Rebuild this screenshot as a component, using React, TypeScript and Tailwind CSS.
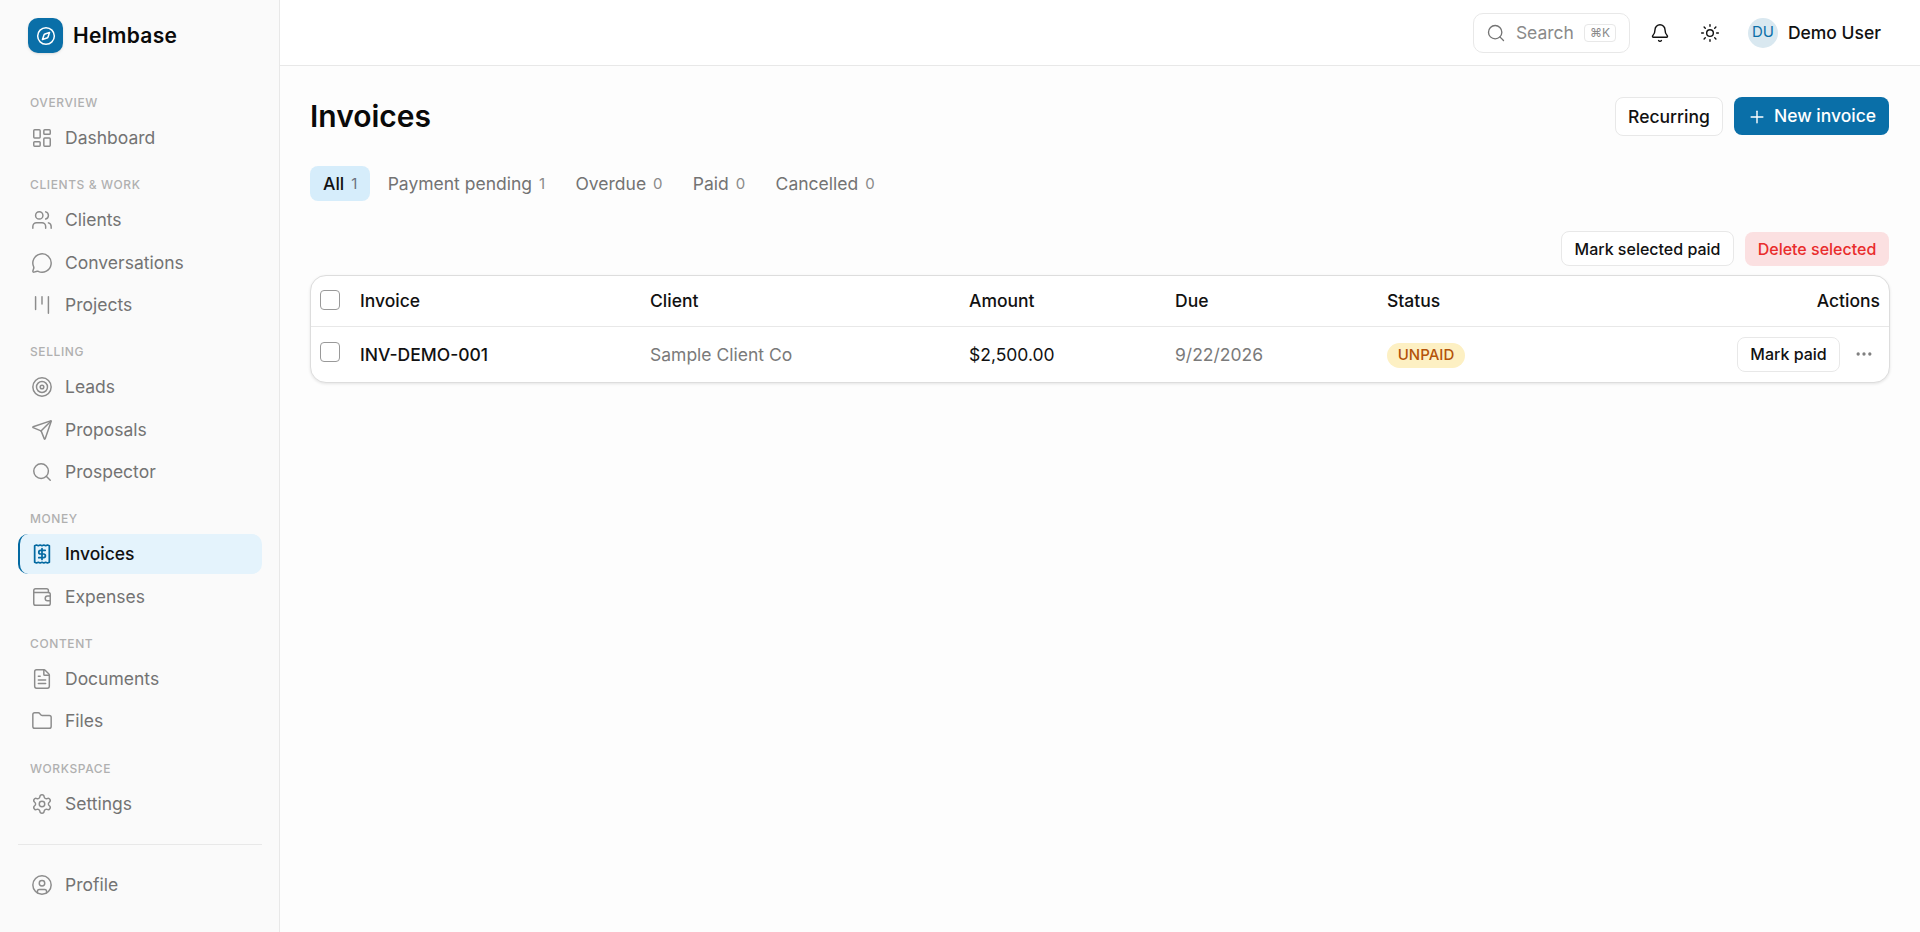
import { Bell, Compass, Ellipsis, FileText, Folder, Kanban, LayoutDashboard, MessageCircle, Plus, Search, Send, Settings, Sun, Target, UserCircle, Users } from 'lucide-react';
import type { ComponentType, ReactNode } from 'react';

type IconProps = { size?: number; strokeWidth?: number; className?: string };

// lucide's receipt is too narrow for what the sidebar shows
function InvoiceIcon({ size = 22, className }: IconProps) {
  return (
    <svg width={size} height={size} viewBox="0 0 24 24" fill="none" stroke="currentColor" strokeWidth={1.9} strokeLinecap="round" strokeLinejoin="round" className={className}>
      <path d="M4 3l2 -.8 2 .8 2 -.8 2 .8 2 -.8 2 .8 2 -.8 2 .8v18l-2 .8 -2 -.8 -2 .8 -2 -.8 -2 .8 -2 -.8 -2 .8 -2 -.8z" />
      <path d="M15.5 8h-5a2 2 0 0 0 0 4h3.2a2 2 0 0 1 0 4h-5.2" />
      <path d="M12 6v12" />
    </svg>
  );
}

function WalletIcon({ size = 22, className }: IconProps) {
  return (
    <svg width={size} height={size} viewBox="0 0 24 24" fill="none" stroke="currentColor" strokeWidth={1.6} strokeLinecap="round" strokeLinejoin="round" className={className}>
      <path d="M19 7V5a2 2 0 0 0-2-2H5a2 2 0 0 0-2 2v14a2 2 0 0 0 2 2h14a2 2 0 0 0 2-2v-3" />
      <path d="M3 7h16a2 2 0 0 1 2 2v2" />
      <path d="M21 11h-3a2.5 2.5 0 0 0 0 5h3z" />
    </svg>
  );
}

type NavItem = { label: string; icon: ComponentType<IconProps>; active?: boolean };

const sections: { title: string; items: NavItem[] }[] = [
  { title: 'Overview', items: [{ label: 'Dashboard', icon: LayoutDashboard }] },
  {
    title: 'Clients & Work',
    items: [
      { label: 'Clients', icon: Users },
      { label: 'Conversations', icon: MessageCircle },
      { label: 'Projects', icon: Kanban },
    ],
  },
  {
    title: 'Selling',
    items: [
      { label: 'Leads', icon: Target },
      { label: 'Proposals', icon: Send },
      { label: 'Prospector', icon: Search },
    ],
  },
  {
    title: 'Money',
    items: [
      { label: 'Invoices', icon: InvoiceIcon, active: true },
      { label: 'Expenses', icon: WalletIcon },
    ],
  },
  {
    title: 'Content',
    items: [
      { label: 'Documents', icon: FileText },
      { label: 'Files', icon: Folder },
    ],
  },
  { title: 'Workspace', items: [{ label: 'Settings', icon: Settings }] },
];

const tabs = [
  { label: 'All', count: 1, active: true },
  { label: 'Payment pending', count: 1 },
  { label: 'Overdue', count: 0 },
  { label: 'Paid', count: 0 },
  { label: 'Cancelled', count: 0 },
];

function SideLink({ item }: { item: NavItem }) {
  const Icon = item.icon;
  return (
    <a
      className={`flex h-10 items-center gap-3 rounded-[10px] border-l-2 pl-[11px] text-[17.5px] ${
        item.active ? 'border-[#0369a1] bg-[#e4f3fc] font-[450] text-[#111111]' : 'border-transparent text-[#737373]'
      }`}
    >
      <Icon size={22} strokeWidth={1.6} className={item.active ? 'text-[#0369a1]' : 'text-[#8c8c8c]'} />
      {item.label}
    </a>
  );
}

function OutlineButton({ children, className = '' }: { children: ReactNode; className?: string }) {
  return (
    <button className={`rounded-lg border border-[#e8e8e8] bg-white font-[450] text-[#111111] ${className}`}>
      {children}
    </button>
  );
}

function Checkbox() {
  return <input type="checkbox" className="block h-5 w-5 appearance-none rounded-[4px] border border-[#999999] bg-white" />;
}

export default function App() {
  return (
    <div className="flex h-[932px] overflow-hidden bg-[#fdfdfd] font-['Inter',sans-serif] text-[#111111]">
      <aside className="flex w-[280px] shrink-0 flex-col border-r border-[#e8e8e8] bg-[#fafafa] pl-[18px] pr-[17px]">
        <div className="flex items-center gap-[10px] pl-[10px] pt-[18px]">
          <div className="flex h-[35px] w-[35px] items-center justify-center rounded-[10px] bg-[#0a6fa8] text-white shadow-sm">
            <Compass size={20} strokeWidth={1.8} />
          </div>
          <span className="text-[21px] font-semibold tracking-[0.3px] text-[#0a0a0a]">Helmbase</span>
        </div>

        <nav className="mt-10 flex flex-col gap-[17.4px]">
          {sections.map((section) => (
            <div key={section.title}>
              <div className="mb-[5px] pl-3 text-xs font-medium uppercase leading-5 tracking-[0.6px] text-[#b0b0b0]">
                {section.title}
              </div>
              <div className="flex flex-col gap-[2.3px]">
                {section.items.map((item) => (
                  <SideLink key={item.label} item={item} />
                ))}
              </div>
            </div>
          ))}
        </nav>

        <div className="mt-5 border-t border-[#e8e8e8] pt-5">
          <SideLink item={{ label: 'Profile', icon: UserCircle }} />
        </div>
      </aside>

      <div className="flex min-w-0 flex-1 flex-col">
        <header className="flex h-[66px] shrink-0 items-center justify-end border-b border-[#e8e8e8] bg-white pr-[39px]">
          <div className="flex h-10 w-[157px] items-center rounded-[10px] border border-[#e8e8e8] pl-3">
            <Search size={20} strokeWidth={1.6} className="text-[#737373]" />
            <span className="ml-[10px] pt-px text-[17.5px] text-[#8a8a8a]">Search</span>
            <kbd className="ml-[10px] flex h-[18px] w-8 items-center justify-center rounded border border-[#e8e8e8] font-['Inter',sans-serif] text-xs text-[#8a8a8a]">
              ⌘K
            </kbd>
          </div>
          <Bell size={20} strokeWidth={1.7} className="ml-5" />
          <Sun size={20} strokeWidth={1.7} className="ml-[30px]" />
          <div className="ml-[28px] flex h-[30px] w-[30px] items-center justify-center rounded-full bg-[#d9e8f0] text-[15px] text-[#0a6fa8]">
            DU
          </div>
          <span className="ml-[10px] pt-px text-[17.5px] font-[450]">Demo User</span>
        </header>

        <main className="flex-1 pl-[30px] pr-[30px]">
          <div className="flex items-center justify-between pr-px pt-[30px]">
            <h1 className="text-[30px] font-semibold leading-10 text-[#0a0a0a]">Invoices</h1>
            <div className="flex items-center gap-[11px]">
              <OutlineButton className="h-[39px] w-[108px] pt-[2px] text-[17.5px]">Recurring</OutlineButton>
              <button className="flex h-[38px] w-[155px] items-center justify-center gap-[7px] rounded-lg bg-[#0a6fa8] pt-px text-[17.5px] font-[450] text-white">
                <Plus size={20} strokeWidth={1.7} />
                New invoice
              </button>
            </div>
          </div>

          <div className="mt-[30px] flex items-center gap-[4.3px]">
            {tabs.map((tab) => (
              <button
                key={tab.label}
                className={`flex h-[35px] items-center gap-[7px] rounded-lg px-[13px] pt-px text-[17.5px] ${
                  tab.active ? 'bg-[#d6edfb] font-[450] text-[#111111]' : 'text-[#737373]'
                }`}
              >
                {tab.label}
                <span className={`text-[15px] font-normal ${tab.active ? 'text-[#6b7280]' : 'text-[#8a8a8a]'}`}>{tab.count}</span>
              </button>
            ))}
          </div>

          <div className="mt-[30px] flex items-center justify-end gap-[11px] pr-px">
            <OutlineButton className="h-[35px] w-[173px] text-base">Mark selected paid</OutlineButton>
            <button className="h-[34px] w-[144px] rounded-lg bg-[#fbe0e1] text-base font-[450] text-[#e92c2c]">
              Delete selected
            </button>
          </div>

          <div className="mt-[9px] overflow-hidden rounded-2xl border border-[#dddddd] bg-white shadow-[0_1px_3px_rgba(0,0,0,0.1)]">
            <table className="w-full table-fixed border-collapse text-[17.5px]">
              <colgroup>
                <col className="w-[39px]" />
                <col className="w-[290px]" />
                <col className="w-[319px]" />
                <col className="w-[206px]" />
                <col className="w-[212px]" />
                <col />
              </colgroup>
              <thead>
                <tr className="h-[50px] border-b border-[#e8e8e8]">
                  <th className="pb-[2px] pl-[9px]">
                    <Checkbox />
                  </th>
                  <th className="px-[10px] text-left font-[450]">Invoice</th>
                  <th className="px-[10px] text-left font-[450]">Client</th>
                  <th className="px-[10px] text-left font-[450]">Amount</th>
                  <th className="px-[10px] text-left font-[450]">Due</th>
                  <th className="px-[10px] text-left font-[450]">Status</th>
                  <th className="pl-[10px] pr-[9px] text-right font-[450]">Actions</th>
                </tr>
              </thead>
              <tbody>
                <tr className="h-[56px]">
                  <td className="pb-1 pl-[9px]">
                    <Checkbox />
                  </td>
                  <td className="px-[10px] pt-px font-[450]">INV-DEMO-001</td>
                  <td className="px-[10px] pt-px text-[#7a7a7a]">Sample Client Co</td>
                  <td className="px-[10px] pt-px">$2,500.00</td>
                  <td className="px-[10px] pt-px text-[#7a7a7a]">9/22/2026</td>
                  <td className="px-[10px]">
                    <span className="inline-flex h-[25px] w-[78px] items-center justify-center rounded-full bg-[#fdf0c3] text-[15px] font-[450] text-[#b45309]">
                      UNPAID
                    </span>
                  </td>
                  <td className="px-[10px]">
                    <div className="flex items-center justify-end gap-[14px] pr-[5px]">
                      <OutlineButton className="h-[35px] w-[103px] text-base">Mark paid</OutlineButton>
                      <Ellipsis size={20} className="text-[#808080]" />
                    </div>
                  </td>
                </tr>
              </tbody>
            </table>
          </div>
        </main>
      </div>
    </div>
  );
}
